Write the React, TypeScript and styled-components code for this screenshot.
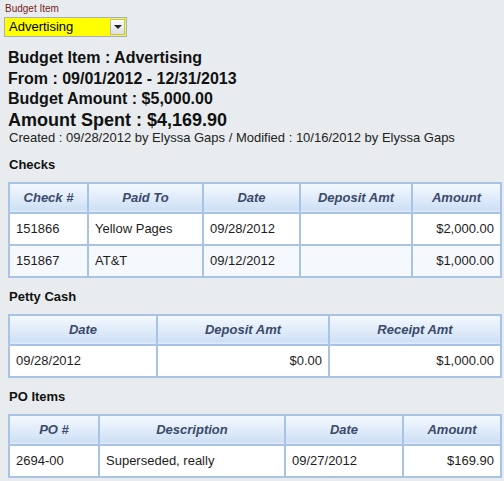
import styled, { createGlobalStyle } from "styled-components";

const GlobalStyle = createGlobalStyle`
  html, body {
    margin: 0;
    padding: 0;
    background: #e8ecef;
  }
  body {
    font-family: "Liberation Sans", Arial, sans-serif;
    color: #111;
  }
`;

export const Page = styled.div`
  width: 504px;
  padding: 3px 4px 4px 8px;
  box-sizing: border-box;
`;

export const FieldLabel = styled.div`
  font-size: 10px;
  line-height: 12px;
  color: #7a1e1e;
  margin-left: -3px;
`;

export const SelectBox = styled.div`
  display: flex;
  align-items: stretch;
  width: 123px;
  height: 20px;
  margin: 2px 0 0 -4px;
  box-sizing: border-box;
  border: 1px solid #a7b0ba;
  background: #ffff00;
`;

export const SelectValue = styled.div`
  flex: 1;
  font-size: 13px;
  line-height: 18px;
  padding-left: 4px;
  color: #000;
`;

export const ArrowButton = styled.div`
  width: 15px;
  margin: 1px;
  box-sizing: border-box;
  border: 1px solid #b4b9bf;
  background: linear-gradient(#fbfbfb, #dcdfe3);
  display: flex;
  align-items: center;
  justify-content: center;

  &::after {
    content: "";
    border-left: 4px solid transparent;
    border-right: 4px solid transparent;
    border-top: 4px solid #222;
  }
`;

export const Summary = styled.div`
  margin-top: 11px;
`;

export const SummaryLine = styled.div<{ $big?: boolean }>`
  font-weight: bold;
  font-size: ${(p) => (p.$big ? "18px" : "16px")};
  line-height: ${(p) => (p.$big ? "21px" : "20.5px")};
  color: #111;
`;

export const Audit = styled.div`
  font-size: 13px;
  line-height: 14px;
  color: #222;
  margin-left: 1px;
`;

export const SectionTitle = styled.div`
  font-weight: bold;
  font-size: 13px;
  line-height: 16px;
  color: #111;
  margin: 0 0 9px 1px;
`;

export const Section = styled.div<{ $gap: number }>`
  margin-top: ${(p) => p.$gap}px;
`;

export const Grid = styled.table`
  width: 492px;
  border-collapse: collapse;
  table-layout: fixed;
  border: 2px solid #a9c3e6;
  background: #fff;
  font-size: 13px;
`;

export const HeadCell = styled.th`
  height: 28px;
  padding: 0 4px;
  border: 2px solid #a9c3e6;
  background: linear-gradient(#f3f8fe 0%, #e2edfa 45%, #cfe0f5 92%, #e3edf9 100%);
  color: #3b4a6a;
  font-style: italic;
  font-weight: bold;
  text-align: center;
`;

export const Row = styled.tr<{ $alt?: boolean }>`
  background: ${(p) => (p.$alt ? "#f5f8fc" : "#ffffff")};
`;

export const Cell = styled.td<{ $right?: boolean }>`
  height: 30px;
  padding: 0 6px;
  border: 2px solid #a9c3e6;
  color: #1d1d1d;
  text-align: ${(p) => (p.$right ? "right" : "left")};
  white-space: nowrap;
`;

type Column = { title: string; width: number; right?: boolean };

function DataGrid({ columns, rows }: { columns: Column[]; rows: string[][] }) {
  return (
    <Grid>
      <colgroup>
        {columns.map((c) => (
          <col key={c.title} style={{ width: c.width }} />
        ))}
      </colgroup>
      <thead>
        <tr>
          {columns.map((c) => (
            <HeadCell key={c.title}>{c.title}</HeadCell>
          ))}
        </tr>
      </thead>
      <tbody>
        {rows.map((r, i) => (
          <Row key={i} $alt={i % 2 === 1}>
            {r.map((v, j) => (
              <Cell key={j} $right={columns[j].right}>
                {v}
              </Cell>
            ))}
          </Row>
        ))}
      </tbody>
    </Grid>
  );
}

const checkCols: Column[] = [
  { title: "Check #", width: 79 },
  { title: "Paid To", width: 115 },
  { title: "Date", width: 97 },
  { title: "Deposit Amt", width: 112, right: true },
  { title: "Amount", width: 89, right: true },
];

const pettyCols: Column[] = [
  { title: "Date", width: 148 },
  { title: "Deposit Amt", width: 172, right: true },
  { title: "Receipt Amt", width: 172, right: true },
];

const poCols: Column[] = [
  { title: "PO #", width: 90 },
  { title: "Description", width: 186 },
  { title: "Date", width: 118 },
  { title: "Amount", width: 98, right: true },
];

function App() {
  return (
    <>
      <GlobalStyle />
      <Page>
        <FieldLabel>Budget Item</FieldLabel>
        <SelectBox>
          <SelectValue>Advertising</SelectValue>
          <ArrowButton />
        </SelectBox>

        <Summary>
          <SummaryLine>Budget Item : Advertising</SummaryLine>
          <SummaryLine>From : 09/01/2012 - 12/31/2013</SummaryLine>
          <SummaryLine>Budget Amount : $5,000.00</SummaryLine>
          <SummaryLine $big>Amount Spent : $4,169.90</SummaryLine>
          <Audit>
            Created : 09/28/2012 by Elyssa Gaps / Modified : 10/16/2012 by Elyssa Gaps
          </Audit>
        </Summary>

        <Section $gap={12}>
          <SectionTitle>Checks</SectionTitle>
          <DataGrid
            columns={checkCols}
            rows={[
              ["151866", "Yellow Pages", "09/28/2012", "", "$2,000.00"],
              ["151867", "AT&T", "09/12/2012", "", "$1,000.00"],
            ]}
          />
        </Section>

        <Section $gap={11}>
          <SectionTitle>Petty Cash</SectionTitle>
          <DataGrid
            columns={pettyCols}
            rows={[["09/28/2012", "$0.00", "$1,000.00"]]}
          />
        </Section>

        <Section $gap={11}>
          <SectionTitle>PO Items</SectionTitle>
          <DataGrid
            columns={poCols}
            rows={[["2694-00", "Superseded, really", "09/27/2012", "$169.90"]]}
          />
        </Section>
      </Page>
    </>
  );
}

export default App;
